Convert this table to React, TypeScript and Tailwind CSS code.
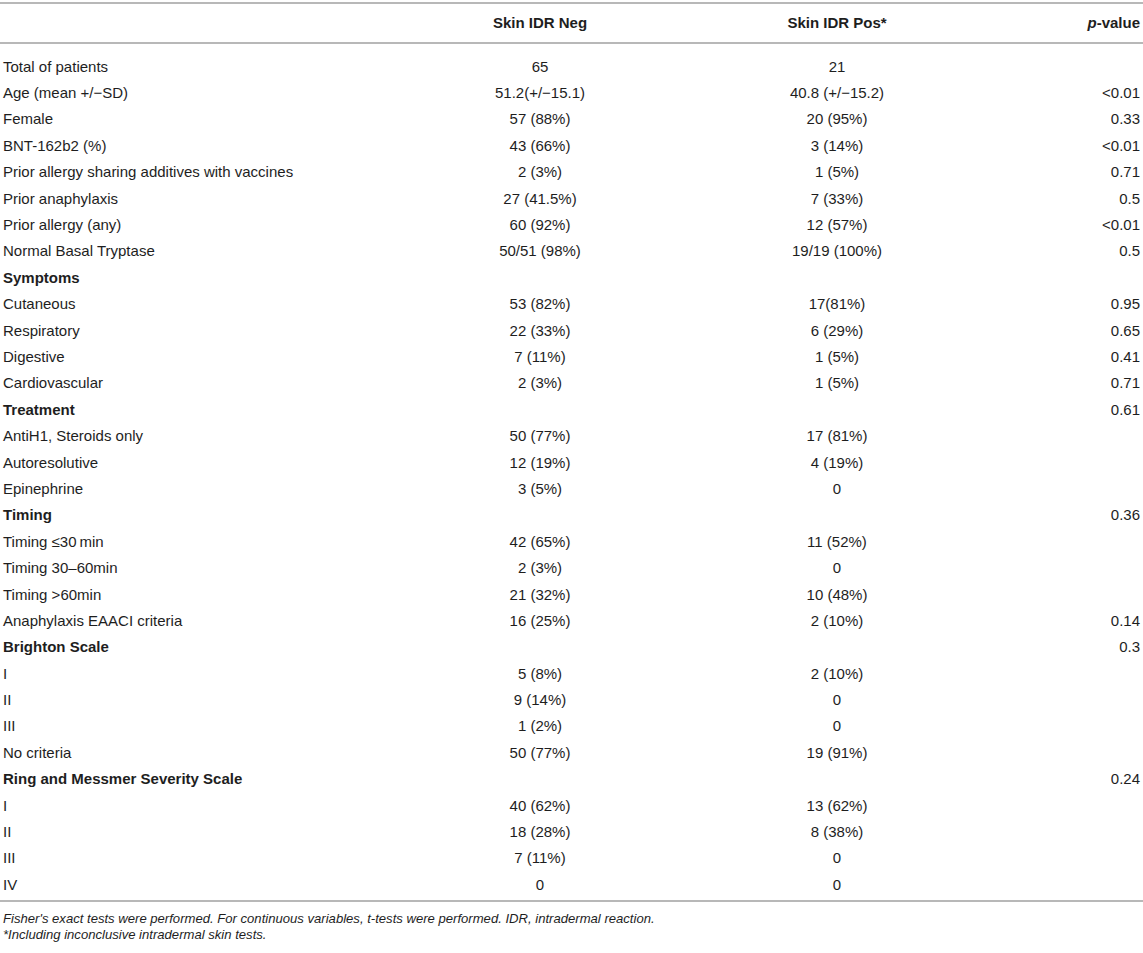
import React from 'react';

type Row = {
  label: string;
  neg?: string;
  pos?: string;
  p?: string;
  section?: boolean;
};

const rows: Row[] = [
  { label: 'Total of patients', neg: '65', pos: '21' },
  { label: 'Age (mean +/\u2212SD)', neg: '51.2(+/\u221215.1)', pos: '40.8 (+/\u221215.2)', p: '<0.01' },
  { label: 'Female', neg: '57 (88%)', pos: '20 (95%)', p: '0.33' },
  { label: 'BNT-162b2 (%)', neg: '43 (66%)', pos: '3 (14%)', p: '<0.01' },
  { label: 'Prior allergy sharing additives with vaccines', neg: '2 (3%)', pos: '1 (5%)', p: '0.71' },
  { label: 'Prior anaphylaxis', neg: '27 (41.5%)', pos: '7 (33%)', p: '0.5' },
  { label: 'Prior allergy (any)', neg: '60 (92%)', pos: '12 (57%)', p: '<0.01' },
  { label: 'Normal Basal Tryptase', neg: '50/51 (98%)', pos: '19/19 (100%)', p: '0.5' },
  { label: 'Symptoms', section: true },
  { label: 'Cutaneous', neg: '53 (82%)', pos: '17(81%)', p: '0.95' },
  { label: 'Respiratory', neg: '22 (33%)', pos: '6 (29%)', p: '0.65' },
  { label: 'Digestive', neg: '7 (11%)', pos: '1 (5%)', p: '0.41' },
  { label: 'Cardiovascular', neg: '2 (3%)', pos: '1 (5%)', p: '0.71' },
  { label: 'Treatment', section: true, p: '0.61' },
  { label: 'AntiH1, Steroids only', neg: '50 (77%)', pos: '17 (81%)' },
  { label: 'Autoresolutive', neg: '12 (19%)', pos: '4 (19%)' },
  { label: 'Epinephrine', neg: '3 (5%)', pos: '0' },
  { label: 'Timing', section: true, p: '0.36' },
  { label: 'Timing \u226430\u2009min', neg: '42 (65%)', pos: '11 (52%)' },
  { label: 'Timing 30\u201360min', neg: '2 (3%)', pos: '0' },
  { label: 'Timing >60min', neg: '21 (32%)', pos: '10 (48%)' },
  { label: 'Anaphylaxis EAACI criteria', neg: '16 (25%)', pos: '2 (10%)', p: '0.14' },
  { label: 'Brighton Scale', section: true, p: '0.3' },
  { label: 'I', neg: '5 (8%)', pos: '2 (10%)' },
  { label: 'II', neg: '9 (14%)', pos: '0' },
  { label: 'III', neg: '1 (2%)', pos: '0' },
  { label: 'No criteria', neg: '50 (77%)', pos: '19 (91%)' },
  { label: 'Ring and Messmer Severity Scale', section: true, p: '0.24' },
  { label: 'I', neg: '40 (62%)', pos: '13 (62%)' },
  { label: 'II', neg: '18 (28%)', pos: '8 (38%)' },
  { label: 'III', neg: '7 (11%)', pos: '0' },
  { label: 'IV', neg: '0', pos: '0' },
];

const cols = 'grid grid-cols-[387px_300px_294px_1fr] px-[3px]';

export default function App() {
  return (
    <div
      className="w-[1143px] min-h-[953px] bg-white pt-[2px] text-[#1e1e1e]"
      style={{ fontFamily: '"Liberation Sans", Arial, sans-serif' }}
    >
      {/* header */}
      <div className={`${cols} h-[42px] items-center border-y-2 border-[#b8b8b8] text-[15px] font-bold`}>
        <div />
        <div className="text-center">Skin IDR Neg</div>
        <div className="text-center">Skin IDR Pos*</div>
        <div className="text-right">
          <span className="italic">p</span>-value
        </div>
      </div>

      {/* body */}
      <div className="pt-[9px] pb-[2px] border-b-2 border-[#b8b8b8]">
        {rows.map((r, i) => (
          <div key={i} className={`${cols} h-[26.4px] items-center text-[15px] leading-none`}>
            <div className={r.section ? 'font-bold' : ''}>{r.label}</div>
            <div className="text-center">{r.neg}</div>
            <div className="text-center">{r.pos}</div>
            <div className="text-right">{r.p}</div>
          </div>
        ))}
      </div>

      {/* footnotes */}
      <div className="px-[3px] pt-[9px] text-[13.1px] italic leading-[16px]">
        <p>
          Fisher&apos;s exact tests were performed. For continuous variables, t-tests were performed. IDR,
          intradermal reaction.
        </p>
        <p>*Including inconclusive intradermal skin tests.</p>
      </div>
    </div>
  );
}
